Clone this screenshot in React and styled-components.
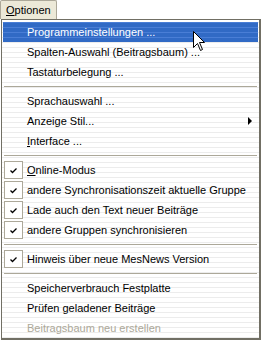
import React from 'react';
import styled, { createGlobalStyle } from 'styled-components';

const GlobalStyle = createGlobalStyle`
  body {
    margin: 0;
    background: #ffffff;
    font-family: "Liberation Sans", Arial, sans-serif;
    font-size: 11px;
    color: #000000;
  }
`;

const Page = styled.div`
  position: relative;
  width: 262px;
  height: 341px;
  overflow: hidden;
`;

const MenuBar = styled.div`
  display: flex;
  height: 19px;
`;

const BarButton = styled.div`
  display: flex;
  align-items: center;
  box-sizing: border-box;
  height: 19px;
  padding: 0 5px;
  background: #ece9d8;
  border: 1px solid #aca899;
  border-bottom: none;
  border-radius: 2px 2px 0 0;
`;

const Menu = styled.div`
  box-sizing: border-box;
  width: 260px;
  margin-left: 1px;
  padding: 2px 1px 0 1px;
  border: 1px solid #716f64;
  border-right-width: 2px;
  border-bottom-width: 2px;
  background: repeating-linear-gradient(
    to bottom,
    #ffffff 0px,
    #ffffff 2px,
    #ececec 2px,
    #ececec 3px,
    #ffffff 3px,
    #ffffff 5px
  );
`;

const Item = styled.div`
  display: flex;
  align-items: center;
  height: 20px;
  color: ${p => (p.$disabled ? '#aca899' : p.$active ? '#ffffff' : '#000000')};
  background: ${p =>
    p.$active
      ? 'repeating-linear-gradient(to bottom, #4a7ed6 0px, #4a7ed6 1px, #316ac5 1px, #316ac5 5px)'
      : 'transparent'};
`;

const CheckCol = styled.div`
  display: flex;
  align-items: center;
  justify-content: center;
  width: 24px;
  height: 20px;
  flex: none;
`;

const CheckBox = styled.div`
  display: flex;
  align-items: center;
  justify-content: center;
  box-sizing: border-box;
  width: 19px;
  height: 18px;
  margin-right: 3px;
  border: 1px solid #aca899;
  background: #ffffff;
`;

const Label = styled.span`
  flex: 1;
  white-space: nowrap;
`;

const Key = styled.span`
  text-decoration: underline;
`;

const Arrow = styled.span`
  width: 0;
  height: 0;
  margin-right: 6px;
  border-top: 4px solid transparent;
  border-bottom: 4px solid transparent;
  border-left: 4px solid #000000;
`;

const Separator = styled.div`
  display: flex;
  align-items: center;
  height: 9px;
  padding: 0 1px 0 1px;

  &::before {
    content: '';
    flex: 1;
    height: 1px;
    background: #aca899;
  }
`;

const Cursor = styled.svg`
  position: absolute;
  left: 193px;
  top: 31px;
`;

const Check = () => (
  <svg width="7" height="7" viewBox="0 0 7 7">
    <path d="M0.5 3.5 L2.5 5.5 L6.5 1.5" fill="none" stroke="#000" strokeWidth="1.3" />
  </svg>
);

const Row = ({ children, checked, active, disabled, sub }) => (
  <Item $active={active} $disabled={disabled}>
    <CheckCol>
      {checked && (
        <CheckBox>
          <Check />
        </CheckBox>
      )}
    </CheckCol>
    <Label>{children}</Label>
    {sub && <Arrow />}
  </Item>
);

export default function App() {
  return (
    <Page>
      <GlobalStyle />
      <MenuBar>
        <BarButton>
          <span><Key>O</Key>ptionen</span>
        </BarButton>
      </MenuBar>
      <Menu>
        <Row active>Programmeinstellungen ...</Row>
        <Row>Spalten-Auswahl (Beitragsbaum) ...</Row>
        <Row>Tastaturbelegung ...</Row>
        <Separator />
        <Row>Sprachauswahl ...</Row>
        <Row sub>Anzeige Stil...</Row>
        <Row><Key>I</Key>nterface ...</Row>
        <Separator />
        <Row checked><Key>O</Key>nline-Modus</Row>
        <Row checked>andere Synchronisationszeit aktuelle Gruppe</Row>
        <Row checked>Lade auch den Text neuer Beiträge</Row>
        <Row checked>andere Gruppen synchronisieren</Row>
        <Separator />
        <Row checked>Hinweis über neue MesNews Version</Row>
        <Separator />
        <Row>Speicherverbrauch Festplatte</Row>
        <Row>Prüfen geladener Beiträge</Row>
        <Row disabled>Beitragsbaum neu erstellen</Row>
      </Menu>
      <Cursor width="13" height="21" viewBox="0 0 13 21">
        <path
          d="M0.5 0.5 L0.5 16.5 L4.5 12.5 L7.5 19.5 L9.5 18.5 L6.5 11.5 L11.5 11.5 Z"
          fill="#ffffff"
          stroke="#000000"
          strokeWidth="1"
        />
      </Cursor>
    </Page>
  );
}
